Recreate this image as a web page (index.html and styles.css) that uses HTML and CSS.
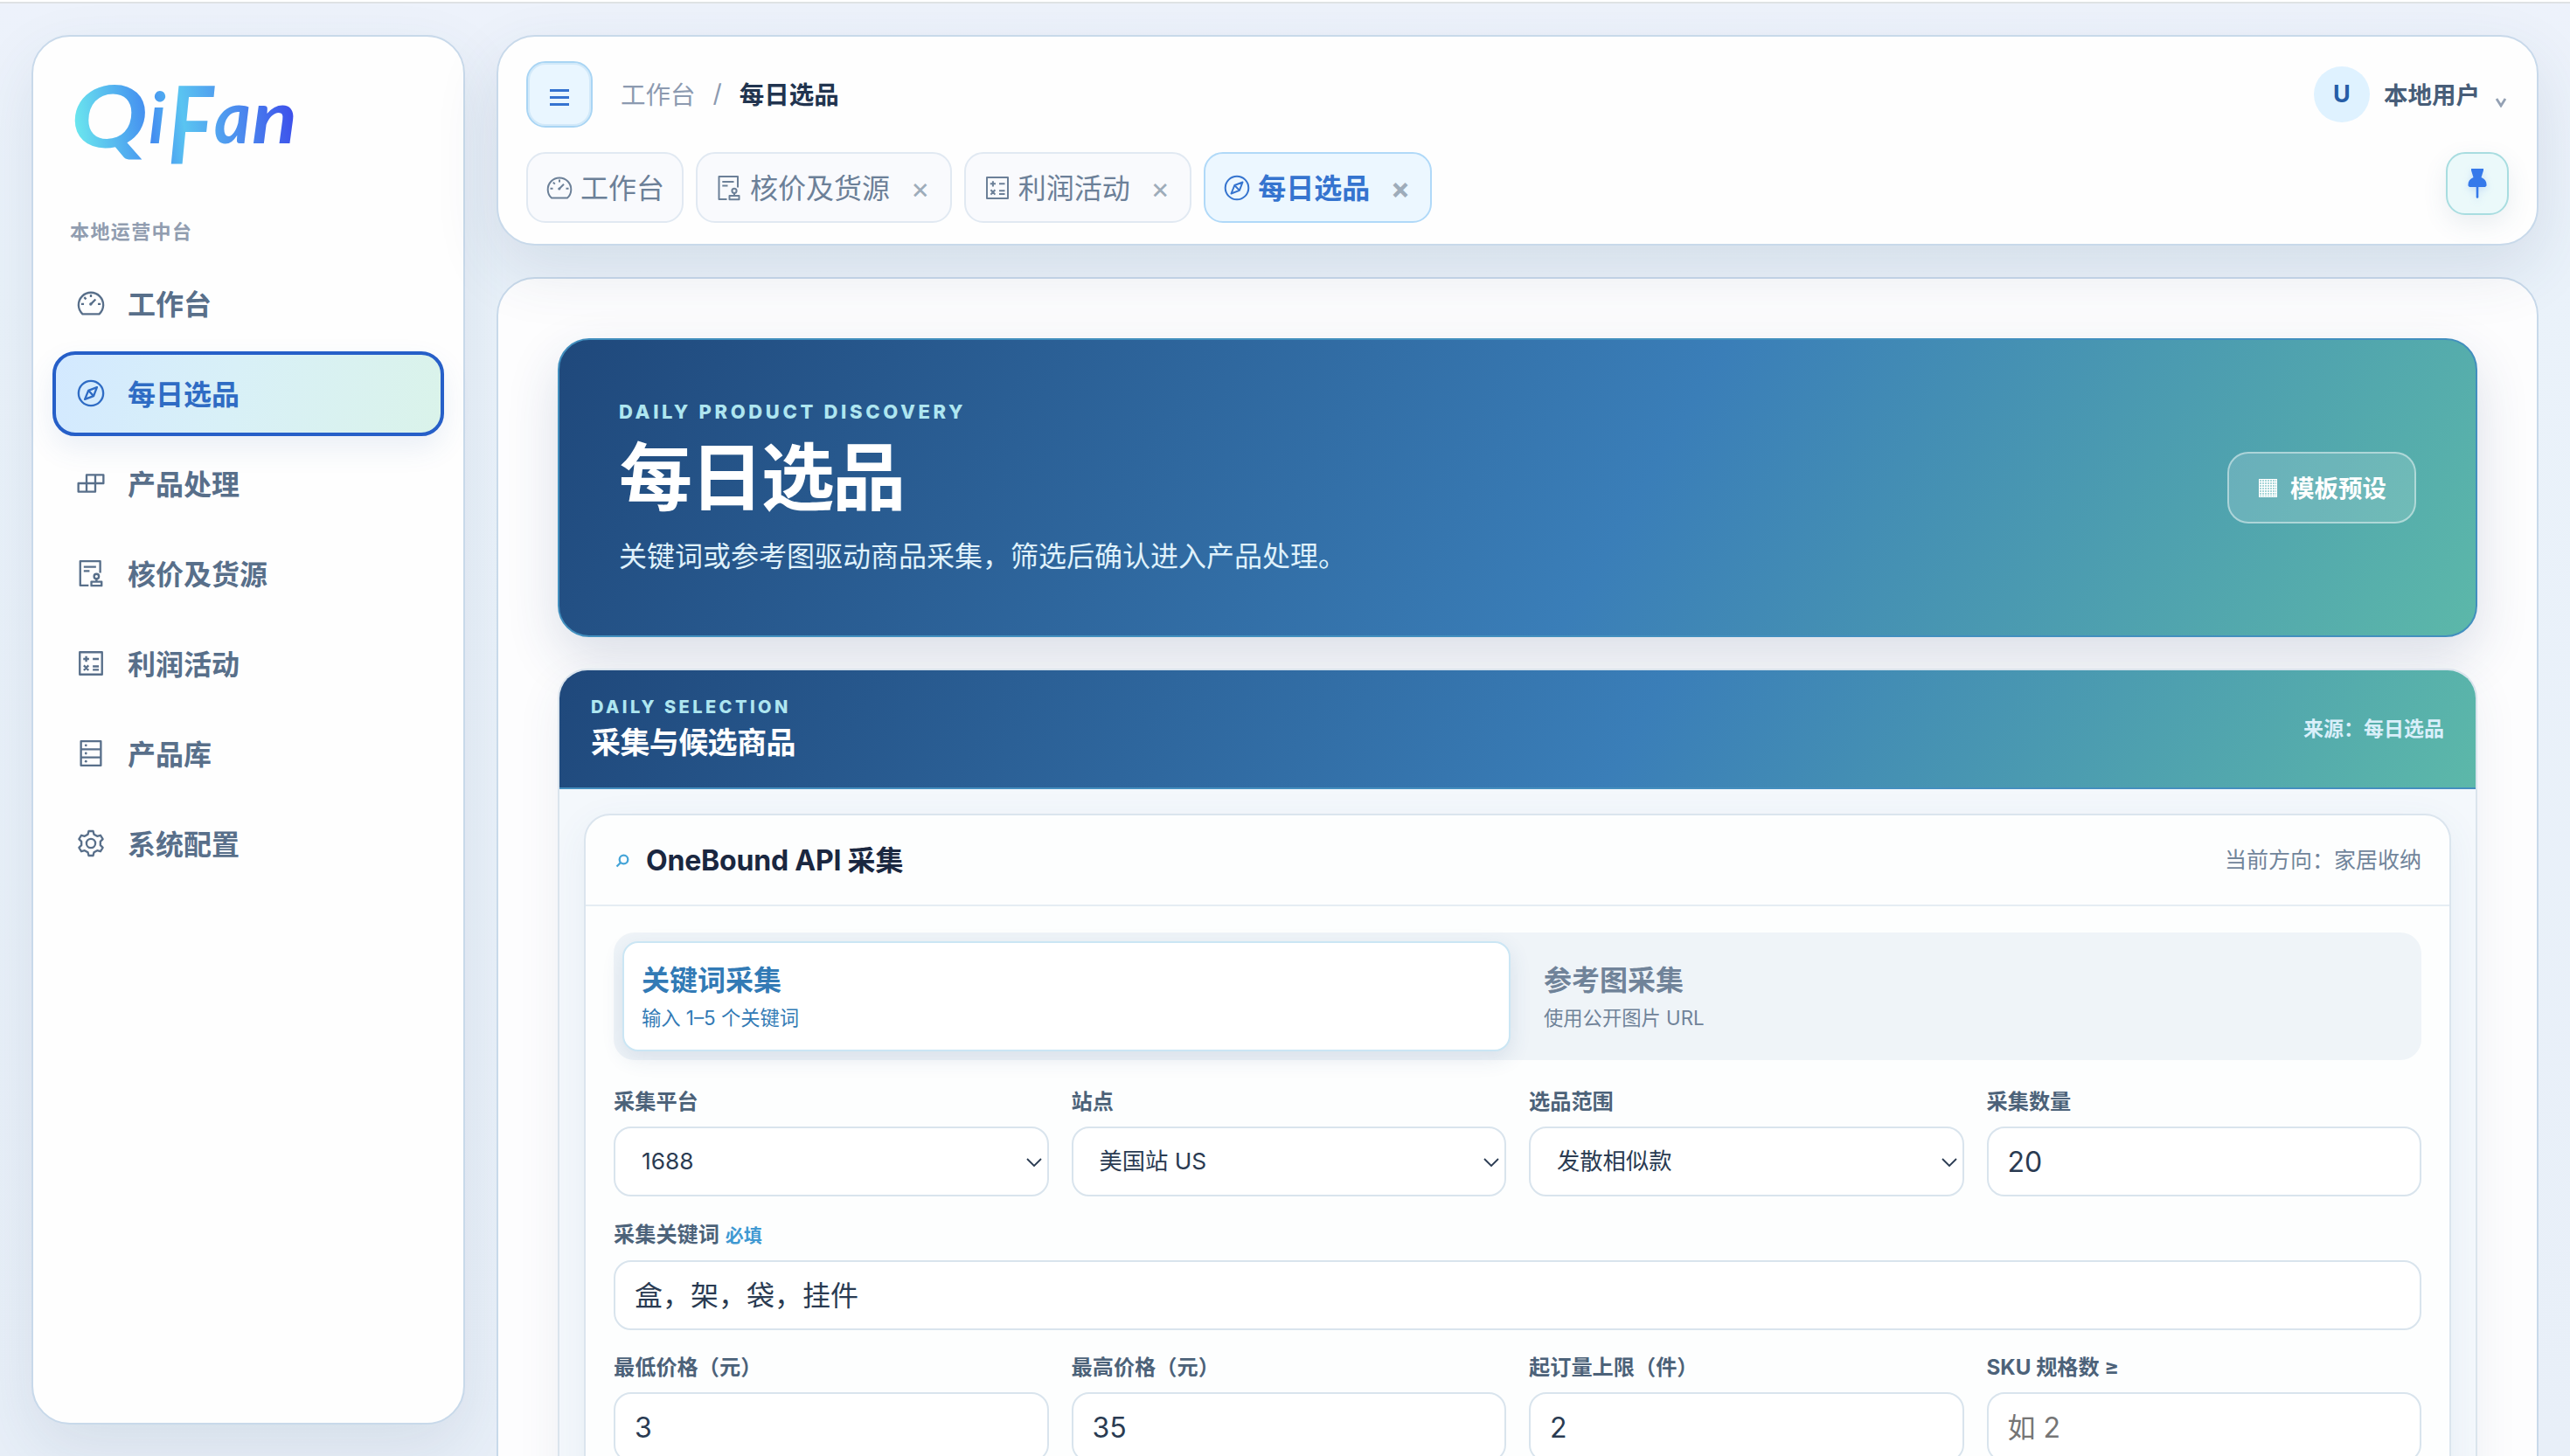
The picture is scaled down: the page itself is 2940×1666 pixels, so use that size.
FILE: index.html
```html
<!DOCTYPE html>
<html lang="zh-CN">
<head>
    <meta charset="UTF-8">
    <meta name="viewport" content="width=device-width, initial-scale=1.0">
    <title>每日选品</title>
    <link rel="stylesheet" href="styles.css">
</head>
<body>
    <!-- Icon set -->
    <svg class="icon-defs" width="0" height="0">
        <symbol id="icon-dashboard" viewBox="0 0 32 32">
            <path d="M7 27.6A13.3 13.3 0 1 1 25 27.6Z"/>
            <path d="M16 16.8L21 11.8M16 6.5V9.5M5.5 16.8H8.5M23.5 16.8H26.5M8.8 9.6L10.8 11.6"/>
            <circle class="solid" cx="15.8" cy="17" r="1.6"/>
        </symbol>
        <symbol id="icon-compass" viewBox="0 0 32 32">
            <circle cx="16" cy="16" r="13.3"/>
            <path d="M22.5 9.5L13.3 13L9.5 22.5L18.9 18.9ZM13.3 13L18.9 18.9"/>
        </symbol>
        <symbol id="icon-build" viewBox="0 0 32 32">
            <path d="M11.3 16V7H29.5V16H20.7V25H2.5V16ZM11.3 16V25M20.7 7V16M11.3 16H20.7"/>
        </symbol>
        <symbol id="icon-audit" viewBox="0 0 32 32">
            <path d="M26 15.5V3H4.5V29H13.5M8.3 9H21.5M8.3 13.5H14.5"/>
            <circle cx="22" cy="19.3" r="2.6"/>
            <path d="M22 22V25M16.5 25H27.5V29.3H16.5Z"/>
        </symbol>
        <symbol id="icon-calculator" viewBox="0 0 32 32">
            <path d="M4 4H28V28H4Z"/>
            <path d="M7.8 11.3H14M10.9 8.2V14.4M18 11.3H24.5M8.4 18.2L13.4 23.6M13.4 18.2L8.4 23.6M18 19.3H24.5M18 22.9H24.5"/>
        </symbol>
        <symbol id="icon-database" viewBox="0 0 32 32">
            <path d="M5.3 3H26.7V29H5.3ZM5.3 11.7H26.7M5.3 20.3H26.7"/>
            <circle class="solid" cx="10.6" cy="7.4" r="1.3"/>
            <circle class="solid" cx="10.6" cy="16" r="1.3"/>
            <circle class="solid" cx="10.6" cy="24.6" r="1.3"/>
        </symbol>
        <symbol id="icon-setting" viewBox="0 0 32 32">
            <path d="M13.6 2.8H18.4L19.3 6.3L22.7 8.3L26.3 7.3L28.8 11.4L26.2 14V18L28.8 20.6L26.3 24.7L22.7 23.7L19.3 25.7L18.4 29.2H13.6L12.7 25.7L9.3 23.7L5.7 24.7L3.2 20.6L5.8 18V14L3.2 11.4L5.7 7.3L9.3 8.3L12.7 6.3Z"/>
            <circle cx="16" cy="16" r="4.8"/>
        </symbol>
        <symbol id="icon-chevron" viewBox="0 0 18 10">
            <path d="M1 1L9 9L17 1"/>
        </symbol>
    </svg>

    <div class="app">
        <aside class="sidebar">
            <svg class="logo" viewBox="0 0 270 110">
                <defs>
                    <linearGradient id="logoFill" gradientUnits="userSpaceOnUse" x1="5" y1="60" x2="258" y2="25">
                        <stop offset="0" stop-color="#6ae5ee"/>
                        <stop offset=".33" stop-color="#438cf0"/>
                        <stop offset=".48" stop-color="#5ac4f1"/>
                        <stop offset=".75" stop-color="#4a86ee"/>
                        <stop offset="1" stop-color="#3b49ea"/>
                    </linearGradient>
                </defs>
                <g fill="url(#logoFill)">
                    <text x="-1" y="85" font-size="98" textLength="88" lengthAdjust="spacingAndGlyphs">Q</text>
                    <text x="88" y="80" font-size="80">i</text>
                    <text x="110" y="103" font-size="122" textLength="52" lengthAdjust="spacingAndGlyphs">F</text>
                    <text x="163" y="80" font-size="84" textLength="42" lengthAdjust="spacingAndGlyphs">a</text>
                    <text x="206" y="80" font-size="84" textLength="52" lengthAdjust="spacingAndGlyphs">n</text>
                </g>
            </svg>
            <p class="sidebar-label">本地运营中台</p>
            <nav class="nav">
                <a class="nav-item"><svg class="icon"><use href="#icon-dashboard"/></svg>工作台</a>
                <a class="nav-item active"><svg class="icon"><use href="#icon-compass"/></svg>每日选品</a>
                <a class="nav-item"><svg class="icon"><use href="#icon-build"/></svg>产品处理</a>
                <a class="nav-item"><svg class="icon"><use href="#icon-audit"/></svg>核价及货源</a>
                <a class="nav-item"><svg class="icon"><use href="#icon-calculator"/></svg>利润活动</a>
                <a class="nav-item"><svg class="icon"><use href="#icon-database"/></svg>产品库</a>
                <a class="nav-item"><svg class="icon"><use href="#icon-setting"/></svg>系统配置</a>
            </nav>
        </aside>

        <div class="content">
            <header class="topbar">
                <div class="topbar-row">
                    <button class="menu-btn">
                        <svg width="22" height="20" viewBox="0 0 22 20"><path d="M0 2.5H22M0 10.5H22M0 18.5H22"/></svg>
                    </button>
                    <div class="breadcrumb"><span>工作台</span><span class="sep">/</span><strong>每日选品</strong></div>
                    <div class="user">
                        <span class="avatar">U</span>
                        <span class="user-name">本地用户</span>
                        <svg class="user-arrow" viewBox="0 0 14 11"><path d="M2 1L7 9L12 1"/></svg>
                    </div>
                </div>
                <div class="tabs-row">
                    <div class="tabs">
                        <div class="tab"><svg class="icon"><use href="#icon-dashboard"/></svg>工作台</div>
                        <div class="tab"><svg class="icon"><use href="#icon-audit"/></svg>核价及货源<span class="close">×</span></div>
                        <div class="tab"><svg class="icon"><use href="#icon-calculator"/></svg>利润活动<span class="close">×</span></div>
                        <div class="tab active"><svg class="icon"><use href="#icon-compass"/></svg>每日选品<span class="close">×</span></div>
                    </div>
                    <button class="pin-btn">
                        <svg width="22" height="34" viewBox="0 0 22 34"><path d="M4 0H18V2L15.5 10C19.5 11.500 21.500 14.500 21.500 18V19.500L20 21H12.300V33L11 34L9.700 33V21H2L.5 19.500V18C.5 14.500 2.500 11.500 6.500 10L4 2Z"/></svg>
                    </button>
                </div>
            </header>

            <main class="panel">
                <!-- Page hero -->
                <section class="hero">
                    <div>
                        <p class="eyebrow">DAILY PRODUCT DISCOVERY</p>
                        <h1>每日选品</h1>
                        <p class="hero-desc">关键词或参考图驱动商品采集，筛选后确认进入产品处理。</p>
                    </div>
                    <button class="preset-btn"><span class="preset-icon"></span>模板预设</button>
                </section>

                <section class="section">
                    <div class="section-head">
                        <div>
                            <p class="eyebrow">DAILY SELECTION</p>
                            <h2>采集与候选商品</h2>
                        </div>
                        <span class="source">来源：每日选品</span>
                    </div>

                    <div class="card">
                        <div class="card-head">
                            <svg class="search-icon" viewBox="0 0 16 16"><circle cx="9.500" cy="6.500" r="4.800"/><path d="M6 10L1.500 14.500"/></svg>
                            <h3>OneBound API 采集</h3>
                            <span class="direction">当前方向：家居收纳</span>
                        </div>
                        <form class="card-body">
                            <div class="modes">
                                <div class="mode active"><strong>关键词采集</strong><small>输入 1–5 个关键词</small></div>
                                <div class="mode"><strong>参考图采集</strong><small>使用公开图片 URL</small></div>
                            </div>
                            <div class="fields">
                                <div class="field">
                                    <label for="platform">采集平台</label>
                                    <div class="select-wrap">
                                        <select id="platform"><option>1688</option></select>
                                        <svg class="chevron"><use href="#icon-chevron"/></svg>
                                    </div>
                                </div>
                                <div class="field">
                                    <label for="site">站点</label>
                                    <div class="select-wrap">
                                        <select id="site"><option>美国站 US</option></select>
                                        <svg class="chevron"><use href="#icon-chevron"/></svg>
                                    </div>
                                </div>
                                <div class="field">
                                    <label for="scope">选品范围</label>
                                    <div class="select-wrap">
                                        <select id="scope"><option>发散相似款</option></select>
                                        <svg class="chevron"><use href="#icon-chevron"/></svg>
                                    </div>
                                </div>
                                <div class="field">
                                    <label for="count">采集数量</label>
                                    <input type="text" id="count" value="20">
                                </div>
                                <div class="field wide">
                                    <label for="keywords">采集关键词 <em>必填</em></label>
                                    <input type="text" id="keywords" value="盒，架，袋，挂件">
                                </div>
                                <div class="field">
                                    <label for="minPrice">最低价格（元）</label>
                                    <input type="text" id="minPrice" value="3">
                                </div>
                                <div class="field">
                                    <label for="maxPrice">最高价格（元）</label>
                                    <input type="text" id="maxPrice" value="35">
                                </div>
                                <div class="field">
                                    <label for="moq">起订量上限（件）</label>
                                    <input type="text" id="moq" value="2">
                                </div>
                                <div class="field">
                                    <label for="sku">SKU 规格数 ≥</label>
                                    <input type="text" id="sku" placeholder="如 2">
                                </div>
                            </div>
                        </form>
                    </div>
                </section>
            </main>
        </div>
    </div>
</body>
</html>
```

FILE: styles.css
```css
* {
    box-sizing: border-box;
}
html, body {
    height: 100%;
    overflow: hidden;
}
body {
    margin: 0;
    font-family: Inter, "Noto Sans CJK SC", sans-serif;
    color: #2b3b52;
    background-color: #ebf2fa;
    border-top: 2px solid #fff;
}
h1, h2, h3, p {
    margin: 0;
}
button, input, select {
    font-family: inherit;
}
.icon-defs {
    position: absolute;
}
.icon {
    flex: none;
    fill: none;
    stroke: currentColor;
    stroke-width: 2.2;
    stroke-linejoin: round;
}
.solid {
    fill: currentColor;
    stroke: none;
}
.app {
    height: 1664px;
    display: flex;
    gap: 36px;
    padding: 36px;
    border-top: 2px solid #dfe2e4;
    background: linear-gradient(180deg, #edf2fb 0, #eaf2fa 300px, #e8eff8 100%);
    overflow: hidden;
}

/* Sidebar */
.sidebar {
    width: 496px;
    height: 1590px;
    flex: none;
    padding: 42px 22px;
    background-color: #fefefe;
    border: 2px solid #c8d9ea;
    border-radius: 44px;
    box-shadow: 0 28px 72px rgba(50, 75, 110, 0.1);
}
.logo {
    display: block;
    width: 270px;
    height: 110px;
    margin-left: 22px;
    font-family: Lato, sans-serif;
    font-weight: bold;
    font-style: italic;
    overflow: visible;
}
.sidebar-label {
    margin: 54px 0 17px 20px;
    font-size: 22px;
    line-height: 34px;
    font-weight: 700;
    letter-spacing: 1.4px;
    color: #919db0;
}
.nav {
    display: flex;
    flex-direction: column;
    gap: 6px;
}
.nav-item {
    display: flex;
    align-items: center;
    gap: 25px;
    height: 97px;
    padding: 0 23px 4px;
    border: 4px solid transparent;
    border-radius: 26px;
    font-size: 32px;
    font-weight: 600;
    color: #586f8a;
}
.nav-item .icon {
    width: 34px;
    height: 34px;
    margin-top: 3px;
}
.nav-item.active {
    color: #2f6cc4;
    background: linear-gradient(105deg, #d3e9ff 0%, #d8f0f7 45%, #daf3ea 100%);
    border-color: #265fc8;
    box-shadow: 0 14px 32px rgba(60, 110, 180, 0.1);
}

/* Top bar */
.content {
    flex: 1;
    min-width: 0;
    display: flex;
    flex-direction: column;
    gap: 36px;
}
.topbar {
    position: relative;
    z-index: 1;
    height: 241px;
    flex: none;
    padding: 28px 32px 24px;
    background-color: #fefefe;
    border: 2px solid #c8d9ea;
    border-radius: 44px;
    box-shadow: 0 28px 72px rgba(50, 75, 110, 0.12);
}
.topbar-row {
    display: flex;
    align-items: center;
    height: 76px;
}
.menu-btn {
    width: 76px;
    height: 76px;
    padding: 6px 0 0;
    background-color: #e9f6ff;
    border: 2px solid #a9d5f4;
    border-radius: 22px;
    box-shadow: inset 0 0 0 2px #d2e9f9;
}
.menu-btn svg {
    display: block;
    margin: auto;
    stroke: #3573d0;
    stroke-width: 3.200;
}
.breadcrumb {
    display: flex;
    align-items: center;
    margin-left: 32px;
    padding-bottom: 3px;
    font-size: 28.500px;
    color: #8c9ab0;
}
.breadcrumb .sep {
    margin: 0 20px;
}
.breadcrumb strong {
    color: #21344f;
    font-weight: 700;
}
.user {
    display: flex;
    align-items: center;
    margin-left: auto;
}
.avatar {
    width: 64px;
    height: 64px;
    border-radius: 50%;
    background-color: #dff2ff;
    color: #265da6;
    font-size: 27px;
    font-weight: 700;
    line-height: 64px;
    text-align: center;
}
.user-name {
    margin-left: 16px;
    padding-bottom: 2px;
    font-size: 27.500px;
    font-weight: 600;
    color: #475d78;
}
.user-arrow {
    width: 14px;
    height: 11px;
    margin: 19px 2px 0 17px;
    fill: none;
    stroke: #94a1b4;
    stroke-width: 2.800;
}
.tabs-row {
    display: flex;
    justify-content: space-between;
    margin-top: 28px;
}
.tabs {
    display: flex;
    gap: 14px;
}
.tab {
    display: flex;
    align-items: center;
    height: 81px;
    padding: 0 20px 4px;
    border: 2px solid #e1e9f2;
    border-radius: 22px;
    background-color: #f9fafd;
    font-size: 32px;
    color: #6c8098;
}
.tab .icon {
    width: 32px;
    height: 32px;
    margin: 4px 8px 0 0;
    stroke-width: 2;
}
.tab .close {
    width: 28px;
    margin: 5px 0 0 20.600px;
    font-size: 33px;
    line-height: 40px;
    text-align: center;
    color: #9eacba;
}
.tab.active {
    background-color: #ecf7ff;
    border-color: #b0d9f8;
    color: #3574cf;
    font-weight: 700;
}
.pin-btn {
    width: 72px;
    height: 72px;
    padding: 0;
    background-color: #ebf9fa;
    border: 2px solid #a8dde0;
    border-radius: 22px;
    box-shadow: 0 10px 28px rgba(60, 100, 130, 0.1);
}
.pin-btn svg {
    display: block;
    margin: auto;
    fill: #3579ea;
    filter: drop-shadow(0 3px 4px rgba(53, 121, 234, 0.2));
}

/* Main panel */
.panel {
    flex: none;
    height: 1500px;
    padding: 68px;
    background-color: #fdfdfe;
    border: 2px solid #c8d9ea;
    border-radius: 44px;
}
.hero {
    display: flex;
    align-items: center;
    justify-content: space-between;
    height: 342px;
    padding: 0 68px;
    border: 2px solid #428fbe;
    border-radius: 36px;
    background: linear-gradient(120deg, #1f487b 0%, #3a7eb8 56%, #5cb8a9 100%);
    background-origin: border-box;
    box-shadow: 0 24px 60px rgba(40, 65, 110, 0.16);
}
.eyebrow {
    font-size: 22px;
    font-weight: 800;
    line-height: 28px;
    letter-spacing: 3.650px;
    color: #aee6f0;
}
.hero h1 {
    margin: 9px 0 15px;
    font-size: 84px;
    line-height: 106px;
    font-weight: 700;
    letter-spacing: -2.600px;
    color: #fff;
}
.hero-desc {
    font-size: 32px;
    line-height: 44px;
    color: #dff1fb;
}
.preset-btn {
    display: flex;
    align-items: center;
    justify-content: center;
    gap: 15px;
    width: 216px;
    height: 82px;
    padding: 0 0 2px 2px;
    border: 2px solid rgba(255, 255, 255, 0.45);
    border-radius: 24px;
    background-color: rgba(255, 255, 255, 0.15);
    color: #fff;
    font-size: 27.500px;
    font-weight: 700;
}
.preset-icon {
    width: 21px;
    height: 21px;
    margin-top: 2px;
    border: 1px solid #fff;
    background: repeating-linear-gradient(90deg, transparent 0 2px, #fff 2px 3px),
        repeating-linear-gradient(180deg, #a8d6d8 0 2px, #fff 2px 3px);
}

/* Selection section */
.section {
    height: 1200px;
    margin-top: 36px;
    background-color: #f4f8fc;
    border: 2px solid #dae4ed;
    border-radius: 34px;
    overflow: hidden;
    box-shadow: 0 16px 50px rgba(50, 75, 110, 0.08);
}
.section-head {
    display: flex;
    align-items: center;
    justify-content: space-between;
    height: 136px;
    padding: 0 36px;
    border-bottom: 2px solid #458fbf;
    background: linear-gradient(120deg, #1f487b 0%, #3a7eb8 56%, #5cb8a9 100%);
}
.section-head .eyebrow {
    font-size: 20px;
    letter-spacing: 3.450px;
    line-height: 24px;
}
.section-head h2 {
    margin-top: 7px;
    font-size: 34px;
    line-height: 44px;
    letter-spacing: -0.600px;
    color: #fff;
}
.source {
    padding-bottom: 4px;
    font-size: 23px;
    font-weight: 700;
    color: #d9effa;
}
.card {
    height: 1000px;
    margin: 28px;
    background-color: #fdfefe;
    border: 2px solid #dbe5ee;
    border-radius: 30px;
    box-shadow: 0 12px 44px rgba(60, 100, 140, 0.07);
}
.card-head {
    display: flex;
    align-items: center;
    height: 104px;
    padding: 0 32px 4px 34px;
    border-bottom: 2px solid #e5edf3;
}
.search-icon {
    width: 16px;
    height: 16px;
    margin: 5px 19px 0 0;
    fill: none;
    stroke: #46a5d8;
    stroke-width: 2.300;
}
.card-head h3 {
    font-size: 32px;
    font-weight: 700;
    letter-spacing: -0.200px;
    color: #1a2740;
}
.direction {
    margin-left: auto;
    font-size: 25px;
    color: #71859b;
}
.card-body {
    padding: 30px 32px;
}
.modes {
    display: grid;
    grid-template-columns: 1fr 1fr;
    gap: 16px;
    height: 146px;
    padding: 10px;
    margin-bottom: 30px;
    border-radius: 24px;
    background-color: #eff4f8;
}
.mode {
    display: flex;
    flex-direction: column;
    justify-content: center;
    gap: 5px;
    padding: 1px 20px 0;
    border: 2px solid transparent;
    border-radius: 18px;
    color: #708399;
}
.mode strong {
    font-size: 32px;
    line-height: 44px;
    font-weight: 600;
}
.mode small {
    font-size: 22.300px;
    line-height: 32px;
}
.mode.active {
    background-color: #fff;
    border-color: #cbe6f4;
    box-shadow: 0 8px 24px rgba(50, 85, 130, 0.12);
    color: #327ab5;
}
.fields {
    display: grid;
    grid-template-columns: repeat(4, 1fr);
    gap: 25.500px 26px;
}
.wide {
    grid-column: 1 / -1;
}
.field label {
    display: block;
    padding-top: 1px;
    margin-bottom: 11px;
    font-size: 24.200px;
    line-height: 34px;
    font-weight: 700;
    color: #4c6279;
    white-space: nowrap;
}
.field label em {
    margin-left: 1px;
    font-size: 21px;
    font-style: normal;
    font-weight: 600;
    color: #3f99d2;
}
.field input,
.field select {
    display: block;
    width: 100%;
    height: 80px;
    padding: 0 22px;
    border: 2px solid #d9e4ed;
    border-radius: 20px;
    background-color: #fff;
    color: #2a3b52;
    font-size: 32px;
}
.field.wide input {
    padding-bottom: 4px;
}
.field input::placeholder {
    color: #757575;
}
.select-wrap {
    position: relative;
}
.field select {
    appearance: none;
    padding: 0 30px 1px;
    font-size: 26.300px;
}
.chevron {
    position: absolute;
    right: 8px;
    top: 36px;
    width: 18px;
    height: 10px;
    fill: none;
    stroke: #2a3b52;
    stroke-width: 1.800;
    pointer-events: none;
}
```
